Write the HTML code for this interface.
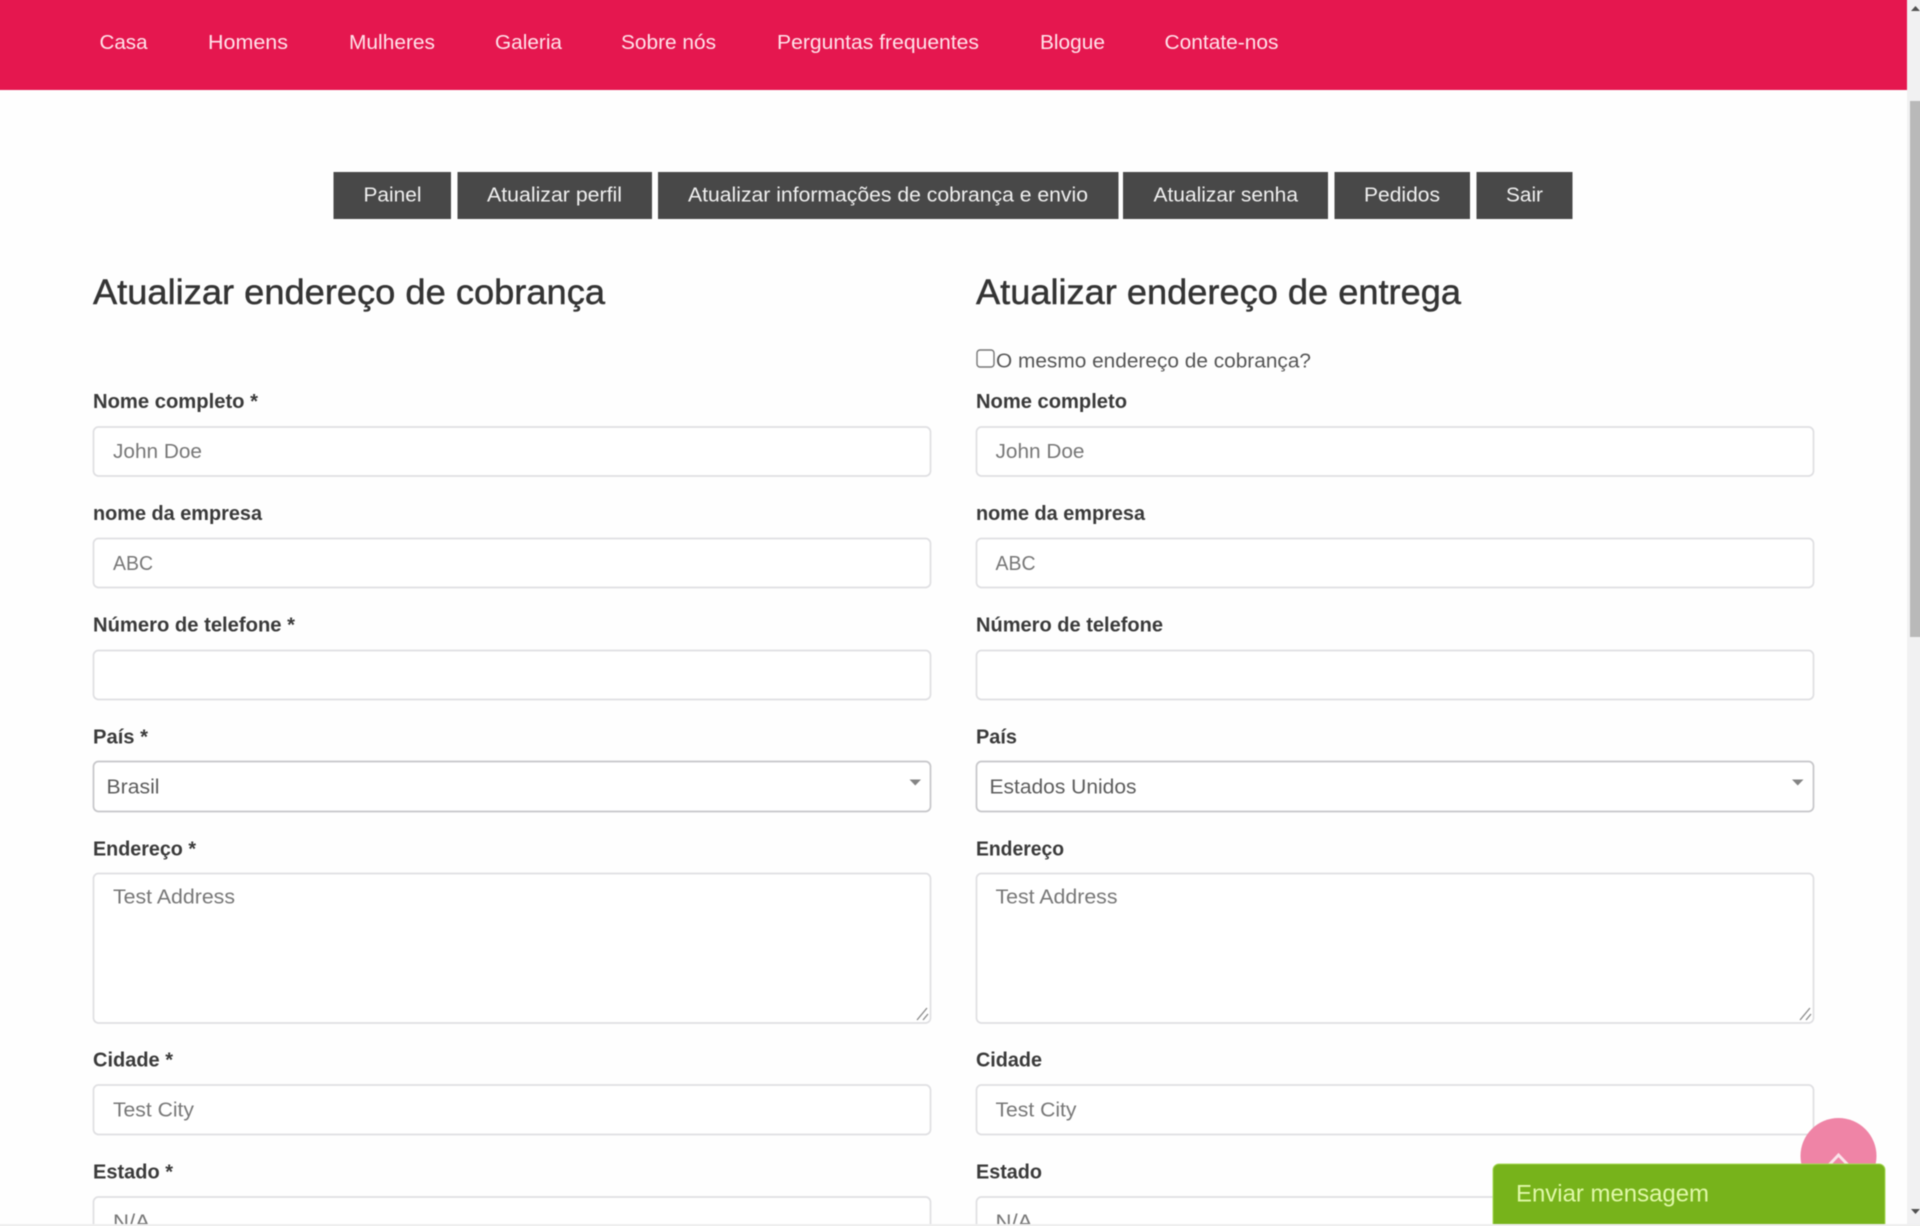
<!DOCTYPE html>
<html lang="pt">
<head>
<meta charset="utf-8">
<title>Atualizar informações de cobrança e envio</title>
<style>
html,body{margin:0;padding:0;background:#fff;width:1920px;height:1226px;overflow:hidden}
svg{display:block}
.soft{filter:blur(.45px)}
text{font-family:"Liberation Sans",Arial,sans-serif}
.nav{font-size:20.5px;fill:#ffe3ea}
.tab{font-size:20.5px;fill:#f0f0f0}
.h{font-size:35.5px;fill:#343434;stroke:#343434;stroke-width:.45px}
.l{font-size:20px;font-weight:700;fill:#3a3a3a}
.p{font-size:20.5px;fill:#777}
.s{font-size:20.5px;fill:#5c5c5c}
.c{font-size:20.5px;fill:#555}
.i{fill:#fff;stroke:#dfdfe2;stroke-width:1.700}
.d{fill:#fff;stroke:#c6c6c9;stroke-width:1.700}
.b{fill:#484848}
</style>
</head>
<body>
<svg xmlns="http://www.w3.org/2000/svg" width="1920" height="1226" viewBox="0 0 1920 1226">
<g class="soft">
<rect x="-10" y="-10" width="1940" height="1246" fill="#fefefe"/>

<!-- scrollbar -->
<rect x="1907" y="-10" width="23" height="1246" fill="#f1f1f2"/>
<rect x="1910" y="101" width="20" height="536" fill="#b9b9b9"/>
<path d="M1911 11l4.500-5 4.500 5z" fill="#505050"/>
<path d="M1911 1209l4.500 5 4.500-5z" fill="#505050"/>

<!-- nav -->
<rect x="-10" y="-10" width="1917" height="100" fill="#e5174f"/>
<text class="nav" x="99.500" y="49" textLength="48" lengthAdjust="spacingAndGlyphs">Casa</text>
<text class="nav" x="208" y="49" textLength="80" lengthAdjust="spacingAndGlyphs">Homens</text>
<text class="nav" x="349" y="49" textLength="86" lengthAdjust="spacingAndGlyphs">Mulheres</text>
<text class="nav" x="495" y="49" textLength="67" lengthAdjust="spacingAndGlyphs">Galeria</text>
<text class="nav" x="621" y="49" textLength="95" lengthAdjust="spacingAndGlyphs">Sobre nós</text>
<text class="nav" x="777" y="49" textLength="202" lengthAdjust="spacingAndGlyphs">Perguntas frequentes</text>
<text class="nav" x="1040" y="49" textLength="65" lengthAdjust="spacingAndGlyphs">Blogue</text>
<text class="nav" x="1164.500" y="49" textLength="114" lengthAdjust="spacingAndGlyphs">Contate-nos</text>

<!-- tabs -->
<rect class="b" x="333.500" y="172" width="117.500" height="47"/>
<rect class="b" x="457.500" y="172" width="194.500" height="47"/>
<rect class="b" x="658" y="172" width="460.500" height="47"/>
<rect class="b" x="1123" y="172" width="205" height="47"/>
<rect class="b" x="1334.500" y="172" width="135.500" height="47"/>
<rect class="b" x="1476.500" y="172" width="96" height="47"/>
<text class="tab" x="363.500" y="201.500" textLength="58" lengthAdjust="spacingAndGlyphs">Painel</text>
<text class="tab" x="487" y="201.500" textLength="135" lengthAdjust="spacingAndGlyphs">Atualizar perfil</text>
<text class="tab" x="688" y="201.500" textLength="400" lengthAdjust="spacingAndGlyphs">Atualizar informações de cobrança e envio</text>
<text class="tab" x="1153.500" y="201.500" textLength="144.500" lengthAdjust="spacingAndGlyphs">Atualizar senha</text>
<text class="tab" x="1364" y="201.500" textLength="76" lengthAdjust="spacingAndGlyphs">Pedidos</text>
<text class="tab" x="1506" y="201.500" textLength="37" lengthAdjust="spacingAndGlyphs">Sair</text>

<!-- headings -->
<text class="h" x="93" y="304" textLength="512" lengthAdjust="spacingAndGlyphs">Atualizar endereço de cobrança</text>
<text class="h" x="976" y="304" textLength="485" lengthAdjust="spacingAndGlyphs">Atualizar endereço de entrega</text>

<!-- checkbox -->
<rect x="977" y="350" width="17" height="17" rx="3" fill="#fff" stroke="#777" stroke-width="1.400"/>
<text class="c" x="996" y="367.500" textLength="315" lengthAdjust="spacingAndGlyphs">O mesmo endereço de cobrança?</text>

<!-- left labels -->
<text class="l" x="93" y="408" textLength="165" lengthAdjust="spacingAndGlyphs">Nome completo *</text>
<text class="l" x="93" y="520" textLength="169" lengthAdjust="spacingAndGlyphs">nome da empresa</text>
<text class="l" x="93" y="631.500" textLength="202" lengthAdjust="spacingAndGlyphs">Número de telefone *</text>
<text class="l" x="93" y="743.500" textLength="55" lengthAdjust="spacingAndGlyphs">País *</text>
<text class="l" x="93" y="855.500" textLength="103" lengthAdjust="spacingAndGlyphs">Endereço *</text>
<text class="l" x="93" y="1066.500" textLength="80" lengthAdjust="spacingAndGlyphs">Cidade *</text>
<text class="l" x="93" y="1178.500" textLength="80" lengthAdjust="spacingAndGlyphs">Estado *</text>

<!-- right labels -->
<text class="l" x="976" y="408" textLength="151" lengthAdjust="spacingAndGlyphs">Nome completo</text>
<text class="l" x="976" y="520" textLength="169" lengthAdjust="spacingAndGlyphs">nome da empresa</text>
<text class="l" x="976" y="631.500" textLength="187" lengthAdjust="spacingAndGlyphs">Número de telefone</text>
<text class="l" x="976" y="743.500" textLength="41" lengthAdjust="spacingAndGlyphs">País</text>
<text class="l" x="976" y="855.500" textLength="88" lengthAdjust="spacingAndGlyphs">Endereço</text>
<text class="l" x="976" y="1066.500" textLength="66" lengthAdjust="spacingAndGlyphs">Cidade</text>
<text class="l" x="976" y="1178.500" textLength="66" lengthAdjust="spacingAndGlyphs">Estado</text>

<!-- left fields -->
<rect class="i" x="93.500" y="427" width="837" height="49" rx="5"/>
<rect class="i" x="93.500" y="538.500" width="837" height="49" rx="5"/>
<rect class="i" x="93.500" y="650.500" width="837" height="49" rx="5"/>
<rect class="d" x="93.500" y="761.500" width="837" height="50" rx="5"/>
<rect class="i" x="93.500" y="873.500" width="837" height="149.500" rx="5"/>
<rect class="i" x="93.500" y="1085" width="837" height="49.500" rx="5"/>
<rect class="i" x="93.500" y="1197" width="837" height="60" rx="5"/>
<text class="p" x="113" y="458" textLength="89" lengthAdjust="spacingAndGlyphs">John Doe</text>
<text class="p" x="113" y="570" textLength="40" lengthAdjust="spacingAndGlyphs">ABC</text>
<text class="s" x="106.500" y="793.500" textLength="53" lengthAdjust="spacingAndGlyphs">Brasil</text>
<text class="p" x="113" y="903.500" textLength="122" lengthAdjust="spacingAndGlyphs">Test Address</text>
<text class="p" x="113" y="1116.500" textLength="81" lengthAdjust="spacingAndGlyphs">Test City</text>
<text class="p" x="113" y="1228.500" textLength="37" lengthAdjust="spacingAndGlyphs">N/A</text>
<path d="M909.500 779.500h11.500l-5.750 6z" fill="#848484"/>
<path d="M917 1020l10-12M923 1020l5-6" stroke="#8a8a8a" stroke-width="1.300" fill="none"/>

<!-- right fields -->
<rect class="i" x="976.500" y="427" width="837" height="49" rx="5"/>
<rect class="i" x="976.500" y="538.500" width="837" height="49" rx="5"/>
<rect class="i" x="976.500" y="650.500" width="837" height="49" rx="5"/>
<rect class="d" x="976.500" y="761.500" width="837" height="50" rx="5"/>
<rect class="i" x="976.500" y="873.500" width="837" height="149.500" rx="5"/>
<rect class="i" x="976.500" y="1085" width="837" height="49.500" rx="5"/>
<rect class="i" x="976.500" y="1197" width="837" height="60" rx="5"/>
<text class="p" x="995.500" y="458" textLength="89" lengthAdjust="spacingAndGlyphs">John Doe</text>
<text class="p" x="995.500" y="570" textLength="40" lengthAdjust="spacingAndGlyphs">ABC</text>
<text class="s" x="989.500" y="793.500" textLength="147" lengthAdjust="spacingAndGlyphs">Estados Unidos</text>
<text class="p" x="995.500" y="903.500" textLength="122" lengthAdjust="spacingAndGlyphs">Test Address</text>
<text class="p" x="995.500" y="1116.500" textLength="81" lengthAdjust="spacingAndGlyphs">Test City</text>
<text class="p" x="995.500" y="1228.500" textLength="37" lengthAdjust="spacingAndGlyphs">N/A</text>
<path d="M1792 779.500h11.500l-5.750 6z" fill="#848484"/>
<path d="M1800 1020l10-12M1806 1020l5-6" stroke="#8a8a8a" stroke-width="1.300" fill="none"/>

<!-- scroll-to-top -->
<circle cx="1838.500" cy="1156" r="38" fill="#ef84a6"/>
<path d="M1829 1165l9.500-10 9.500 10" stroke="#fbe3ea" stroke-width="3" fill="none"/>

<!-- chat -->
<path d="M1493 1236v-66a6 6 0 0 1 6-6h380a6 6 0 0 1 6 6v66z" fill="#77b31b"/>
<path d="M1493 1236v-66a6 6 0 0 1 6-6h380a6 6 0 0 1 6 6v66" fill="none" stroke="#a5d955" stroke-width="1"/>
<text x="1516" y="1201.500" font-size="24" fill="#e0f8a8" textLength="193" lengthAdjust="spacingAndGlyphs">Enviar mensagem</text>

<!-- bottom edge -->
<rect x="-10" y="1224" width="1940" height="12" fill="#efefef"/>
</g>
</svg>
</body>
</html>
